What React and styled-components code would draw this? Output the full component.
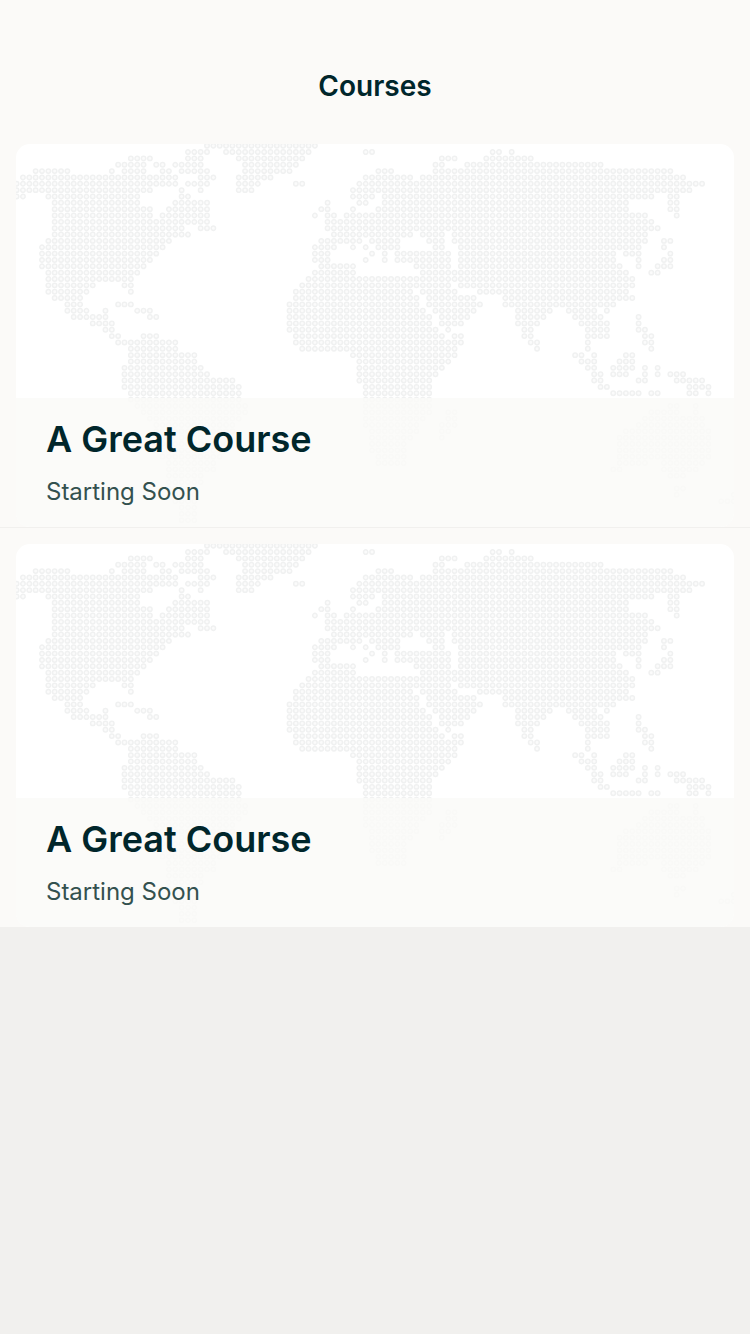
import React from "react";
import styled, { createGlobalStyle } from "styled-components";

const GlobalStyle = createGlobalStyle`
  *, *::before, *::after { box-sizing: border-box; }
  html, body, #root { margin: 0; min-height: 100%; }
  body {
    background: #f1f0ee;
    color: #00262b;
    font-family: Inter, "Liberation Sans", sans-serif;
  }
`;

const Header = styled.header`
  display: flex;
  align-items: center;
  justify-content: center;
  height: 128px;
  padding-top: 44px;
  background: #fbfaf8;
`;

const Title = styled.h1`
  margin: 0;
  font-size: 28px;
  line-height: 36px;
  font-weight: 600;
`;

const CourseList = styled.ul`
  margin: 0;
  padding: 0;
  list-style: none;
`;

const CourseItem = styled.li`
  padding: 16px 16px 0;
  background: #fbfaf8;
  border-bottom: 1px solid #f1f0ee;
`;

const Card = styled.article`
  display: grid;
  height: 383px;
  border-radius: 14px;
  background: #ffffff;
  overflow: hidden;
`;

const Cover = styled.svg`
  grid-area: 1 / 1;
  display: block;
  width: 100%;
  height: 383px;
`;

const Caption = styled.div`
  grid-area: 1 / 1;
  align-self: end;
  z-index: 1;
  height: 129px;
  padding: 18px 30px;
  background: rgba(250, 250, 248, 0.84);
`;

const CourseName = styled.h2`
  margin: 0 0 14px;
  font-size: 36px;
  line-height: 46px;
  font-weight: 600;
`;

const CourseStatus = styled.p`
  margin: 0;
  font-size: 24px;
  line-height: 32px;
  color: #33514f;
`;

// Dotted world map: every line is one row of dots, given as column ranges.
const MAP_ROWS = [
  "30-47",
  "27-30 33-46 55-56 75-76 78",
  "18-21 27-29 35-45 67-69 74-81",
  "16-20 22-23 25-29 36-44 66-67 71-92",
  "3-8 15 17-20 23-24 26-30 36-43 57-59 66-103",
  "1-25 29-31 35-40 55-62 64-105",
  "0-25 27-30 35-38 44-45 54-108",
  "0-21 26 29 35-37 53-106",
  "0-1 5-19 26-27 53-56 58-100 103-104",
  "6-19 25-30 49 54-55 58-96 103-104",
  "6-21 24-30 48-49 53 57-96 103-104",
  "6-21 23-30 47 49-50 52-99 104",
  "6-30 49-100",
  "6-26 29-31 49-101",
  "6-27 50-62 64-67 69-99",
  "5-24 48-54 56-60 65-67 69-99 102-103",
  "4-23 47-50 53 55 57-60 66-67 70-98 102",
  "4-22 47-49 56 58 60-68 70-94 96-98 103",
  "4-21 47-49 55 58 60-68 70-94 98 102-103",
  "4-20 48-53 63-68 70-95 98 101-103",
  "5-19 47-53 64-96 100-101",
  "5-18 46-97",
  "5-12 17-18 45-68 70-97",
  "5-11 18 44-62 64-69 73-96",
  "6-10 44-63 65-72 77-97",
  "8-10 16-18 43-63 65-73 77-94",
  "8-11 14 19-21 43-64 66-72 79-84 87-91 93",
  "9-14 21-22 43-65 67-71 79-83 88-92 98",
  "12-15 43-65 67-70 79-82 89-93 98",
  "14-15 43-66 68 80-81 90-93 98-99",
  "15-16 20-22 44-67 69-70 80-81 90-93 99-100",
  "16-25 44-70 81-82 90 99-100",
  "18-25 45-69 82 90 100",
  "18-28 53-69 88-89 91 96-97",
  "18-28 54-68 89-91 95-97",
  "17-29 54-67 90-91 94-97 99 101",
  "17-30 54-66 91-92 94-96 99 101 103-105",
  "17-34 54-65 91-92 98-99 104-108",
  "17-35 55-65 92-93 106-109",
  "18-35 55-65 94-98 100-101 106-107 109",
  "18-35 55-65",
  "19-36 55-65 103-104 107",
  "20-36 55-65 68-69 100-104 107",
  "21-35 55-64 68-69 99-108",
  "22-34 55-63 67-69 98-108",
  "22-34 56-63 67-68 96-109",
  "23-33 56-62 67 95-109",
  "23-33 56-61 95-109",
  "23-33 56-61 95-109",
  "23-32 57-61 95-109",
  "24-31 57-61 95-99 102-108",
  "24-31 94-95 102-107",
  "24-29 103-105",
  "24-29",
  "24-28 104-105",
  "24-28 104 113",
  "25-28 111-113",
  "26-28",
  "26-28",
  "26-28",
];

const PITCH = 6.347;

const MAP_PATH = MAP_ROWS.map((row, r) =>
  row
    .split(" ")
    .map((range) => {
      const [from, to = from] = range.split("-").map(Number);
      let d = "";
      for (let c = from; c <= to; c += 1) {
        const x = (0.6 + c * PITCH - 2.2).toFixed(2);
        const y = (1.7 + r * PITCH).toFixed(2);
        d += `M${x} ${y}a2.2 2.2 0 1 0 4.4 0a2.2 2.2 0 1 0 -4.4 0`;
      }
      return d;
    })
    .join("")
).join("");

function WorldMap() {
  return (
    <Cover viewBox="0 0 718 383" preserveAspectRatio="xMidYMin slice" aria-hidden="true">
      <path d={MAP_PATH} fill="#fbfbfb" stroke="#f0f1f1" strokeWidth="1.5" />
    </Cover>
  );
}

const COURSES = [
  { id: 1, name: "A Great Course", status: "Starting Soon" },
  { id: 2, name: "A Great Course", status: "Starting Soon" },
];

export default function App() {
  return (
    <>
      <GlobalStyle />
      <Header>
        <Title>Courses</Title>
      </Header>
      <main>
        <CourseList>
          {COURSES.map((course) => (
            <CourseItem key={course.id}>
              <Card>
                <WorldMap />
                <Caption>
                  <CourseName>{course.name}</CourseName>
                  <CourseStatus>{course.status}</CourseStatus>
                </Caption>
              </Card>
            </CourseItem>
          ))}
        </CourseList>
      </main>
    </>
  );
}
